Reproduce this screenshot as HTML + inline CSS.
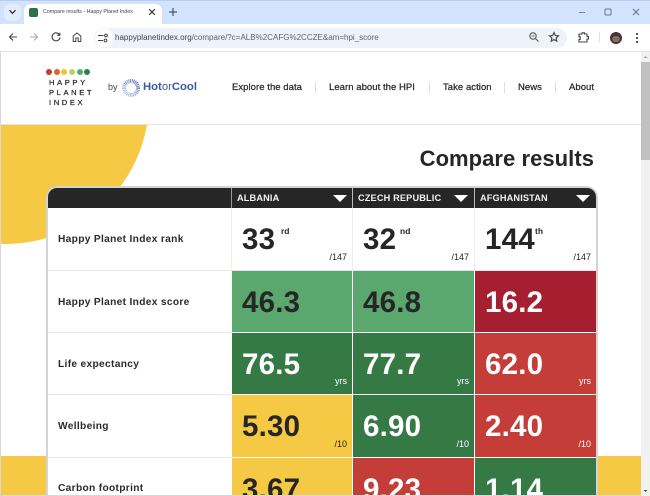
<!DOCTYPE html>
<html><head><meta charset="utf-8"><style>
*{box-sizing:border-box;margin:0;padding:0}
html,body{width:650px;height:496px;overflow:hidden;background:#fff;font-family:"Liberation Sans",sans-serif;color:#262626}
#w{position:relative;width:650px;height:496px;overflow:hidden;background:#fff}
.a{position:absolute}
.t{position:absolute;white-space:nowrap}
.nav{top:81px;font-size:9.5px;font-weight:400;letter-spacing:.05px;color:#2b2b2b;-webkit-text-stroke:.25px #2b2b2b;line-height:13px}
.sep{top:82px;width:1px;height:11px;background:#dedede}
.lab{left:58px;font-size:10.2px;font-weight:700;letter-spacing:.32px;color:#2b2b2b;line-height:14px}
.hd{top:192px;font-size:9.2px;font-weight:700;letter-spacing:.15px;color:#f2f2f2;line-height:12px}
.tri{top:195px;width:0;height:0;border-left:7px solid transparent;border-right:7px solid transparent;border-top:7px solid #fff}
.cell{position:absolute}
.v{position:absolute;left:10px;top:14px;font-size:29.5px;font-weight:700;line-height:36px;letter-spacing:.2px}
.u{position:absolute;right:5px;font-size:9px;line-height:11px;bottom:7px}
.sup{position:absolute;font-size:8.5px;font-weight:700;line-height:10px;top:18px}
.w{color:#fff}.d{color:#262626}
.hl{position:absolute;background:#e8e8e8;height:1px;left:48px;width:184px}
.dot{position:absolute;top:69px;width:6px;height:6px;border-radius:50%}
.lg{position:absolute;left:49px;font-size:7.6px;font-weight:400;letter-spacing:2.6px;color:#222;line-height:9px;-webkit-text-stroke:.2px #222}
</style></head><body><div id="w">

<!-- browser chrome -->
<div class="a" style="left:0;top:0;width:650px;height:24px;background:#d3e3fd"></div>
<div class="a" style="left:0;top:0;width:650px;height:1px;background:#b9cdec"></div>
<div class="a" style="left:4px;top:4px;width:17px;height:17px;border-radius:6px;background:#e4edfc"></div>
<svg class="a" style="left:8px;top:9px" width="9" height="6" viewBox="0 0 9 6"><path d="M1.5 1.2 4.5 4.3 7.5 1.2" fill="none" stroke="#333" stroke-width="1.3"/></svg>
<div class="a" style="left:24px;top:4px;width:138px;height:20px;background:#fff;border-radius:7px 7px 0 0"></div>
<div class="a" style="left:29px;top:8px;width:9px;height:9px;border-radius:2px;background:#2f7048"></div>
<div class="t" style="left:43px;top:7px;font-size:5.3px;line-height:10px;color:#444">Compare results - Happy Planet Index</div>
<svg class="a" style="left:148px;top:8px" width="8" height="8" viewBox="0 0 8 8"><path d="M1.2 1.2 6.8 6.8M6.8 1.2 1.2 6.800" stroke="#333" stroke-width="1.1"/></svg>
<svg class="a" style="left:168px;top:7px" width="10" height="10" viewBox="0 0 10 10"><path d="M5 1V9M1 5H9" stroke="#44546a" stroke-width="1.2"/></svg>
<svg class="a" style="left:578px;top:6px" width="66" height="12" viewBox="0 0 66 12"><path d="M1 6.500H7" stroke="#7a8596" stroke-width="1"/><rect x="27" y="3" width="6" height="6" rx="1" fill="none" stroke="#6a7587" stroke-width="1"/><path d="M55 3 61 9M61 3 55 9" stroke="#6a7587" stroke-width="1"/></svg>

<div class="a" style="left:0;top:24px;width:650px;height:27px;background:#fff"></div>
<div class="a" style="left:0;top:51px;width:650px;height:1px;background:#e2e2e2"></div>
<svg class="a" style="left:7px;top:31px" width="12" height="12" viewBox="0 0 12 12"><path d="M10 6H2.500M6 2.500 2.500 6 6 9.500" fill="none" stroke="#444" stroke-width="1.1"/></svg>
<svg class="a" style="left:28px;top:31px" width="12" height="12" viewBox="0 0 12 12"><path d="M2 6H9.500M6 2.500 9.500 6 6 9.500" fill="none" stroke="#aaa" stroke-width="1.1"/></svg>
<svg class="a" style="left:50px;top:31px" width="12" height="12" viewBox="0 0 12 12"><path d="M9.600 4A4 4 0 1 0 10 6.500M9.800 1.800V4.300H7.300" fill="none" stroke="#444" stroke-width="1.100"/></svg>
<svg class="a" style="left:71px;top:31px" width="12" height="12" viewBox="0 0 12 12"><path d="M2.200 10.500V5L6 2 9.800 5V10.500H7.200V7H4.800V10.500Z" fill="none" stroke="#444" stroke-width="1"/></svg>
<div class="a" style="left:94px;top:28px;width:473px;height:20px;border-radius:10px;background:#eef3fb"></div>
<div class="a" style="left:95px;top:29px;width:18px;height:18px;border-radius:9px;background:#fff"></div>
<svg class="a" style="left:97px;top:32px" width="12" height="12" viewBox="0 0 12 12"><path d="M1 3.500H6.500M1 8.500H6" fill="none" stroke="#444" stroke-width="1"/><circle cx="9" cy="3.500" r="1.400" fill="none" stroke="#444"/><circle cx="8.500" cy="8.500" r="1.400" fill="none" stroke="#444"/></svg>
<div class="t" style="left:115px;top:31px;font-size:8.02px;line-height:14px;color:#5a6270"><span style="color:#3d4350">happyplanetindex.org</span>/compare/?c=ALB%2CAFG%2CCZE&amp;am=hpi_score</div>
<svg class="a" style="left:528px;top:31px" width="12" height="12" viewBox="0 0 12 12"><circle cx="5" cy="5" r="3.200" fill="none" stroke="#555" stroke-width="1.100"/><path d="M7.500 7.500 10.500 10.500M3.500 5H6.500" stroke="#555" stroke-width="1.100"/></svg>
<svg class="a" style="left:548px;top:31px" width="12" height="12" viewBox="0 0 12 12"><path d="M6 1.500 7.300 4.500 10.500 4.800 8.100 7 8.800 10.200 6 8.500 3.200 10.200 3.900 7 1.500 4.800 4.700 4.500Z" fill="none" stroke="#444" stroke-width="1.100"/></svg>
<svg class="a" style="left:577px;top:31px" width="13" height="13" viewBox="0 0 13 13"><path d="M2 3H5V1.800H7.500V3H10V5.500H11.500V8H10V11H2V8.500H3.200V5.800H2Z" fill="none" stroke="#444" stroke-width="1.100"/></svg>
<div class="a" style="left:599px;top:32px;width:1px;height:11px;background:#dfe3ea"></div>
<div class="a" style="left:610px;top:32px;width:12px;height:12px;border-radius:50%;background:#3f3432"></div>
<div class="a" style="left:612px;top:36px;width:8px;height:6px;background:#8a6a60;border-radius:3px"></div>
<div class="a" style="left:636px;top:33px;width:2px;height:2px;background:#555;box-shadow:0 4px #555,0 8px #555"></div>

<!-- page shapes -->
<div class="a" style="left:0;top:124px;width:641px;height:1px;background:#e4e4e4"></div>
<div class="a" style="left:0;top:125px;width:641px;height:371px;overflow:hidden">
 <div class="a" style="left:-138px;top:-168px;width:287px;height:287px;border-radius:50%;background:#f6c945"></div>
 <div class="a" style="left:0;top:331px;width:641px;height:40px;background:#f6c945"></div>
</div>
<div class="a" style="left:0;top:52px;width:1px;height:444px;background:#d8d8d8"></div>

<!-- scrollbar -->
<div class="a" style="left:641px;top:52px;width:9px;height:444px;background:#f1f1f1"></div>
<div class="a" style="left:641px;top:62px;width:9px;height:98px;background:#c1c1c1"></div>
<svg class="a" style="left:641px;top:53px" width="9" height="8"><path d="M2.500 5 4.500 3 6.500 5Z" fill="#a0a0a0"/></svg>
<svg class="a" style="left:641px;top:487px" width="9" height="8"><path d="M2.500 3 4.500 5 6.500 3Z" fill="#505050"/></svg>

<!-- logo -->
<div class="dot" style="left:46px;background:#c8392f"></div>
<div class="dot" style="left:54px;background:#e4622d"></div>
<div class="dot" style="left:61px;background:#f3c431"></div>
<div class="dot" style="left:69px;background:#b9d26f"></div>
<div class="dot" style="left:77px;background:#58a86b"></div>
<div class="dot" style="left:84px;background:#2f7d48"></div>
<div class="lg" style="top:78px">HAPPY</div>
<div class="lg" style="top:88px">PLANET</div>
<div class="lg" style="top:98px">INDEX</div>
<div class="t" style="left:108px;top:81px;font-size:9px;line-height:13px;color:#444">by</div>
<svg class="a" style="left:121px;top:78px" width="20" height="20" viewBox="0 0 20 20"><defs><linearGradient id="g" x1="1" y1="0" x2="0" y2="1"><stop offset="0" stop-color="#3f5fae"/><stop offset="1" stop-color="#b9c6ea"/></linearGradient></defs><circle cx="10" cy="10" r="7" fill="none" stroke="url(#g)" stroke-dasharray=".8 .8" stroke-width="4"/></svg>
<div class="t" style="left:143px;top:80px;font-size:11.3px;line-height:15px;font-weight:700;color:#3a5aa6">Hot<span style="font-weight:400">or</span>Cool</div>

<!-- nav -->
<div class="t nav" style="left:232px">Explore the data</div>
<div class="a sep" style="left:315px"></div>
<div class="t nav" style="left:329px">Learn about the HPI</div>
<div class="a sep" style="left:429px"></div>
<div class="t nav" style="left:443px">Take action</div>
<div class="a sep" style="left:504px"></div>
<div class="t nav" style="left:518px">News</div>
<div class="a sep" style="left:555px"></div>
<div class="t nav" style="left:569px">About</div>

<div class="t" style="right:56px;top:145px;font-size:22px;font-weight:700;line-height:27px;letter-spacing:.05px;color:#262626">Compare results</div>

<!-- table -->
<div class="a" style="left:46px;top:186px;width:552px;height:320px;border:2px solid #d4d4d4;border-radius:12px;background:#fff"></div>
<div class="a" style="left:48px;top:188px;width:548px;height:20px;background:#262626;border-radius:9px 9px 0 0"></div>
<div class="a" style="left:231px;top:188px;width:1px;height:20px;background:#999"></div>
<div class="a" style="left:352px;top:188px;width:1px;height:20px;background:#bbb"></div>
<div class="a" style="left:474px;top:188px;width:1px;height:20px;background:#bbb"></div>
<div class="hd t" style="left:237px">ALBANIA</div><div class="a tri" style="left:333px"></div>
<div class="hd t" style="left:358px">CZECH REPUBLIC</div><div class="a tri" style="left:454px"></div>
<div class="hd t" style="left:480px">AFGHANISTAN</div><div class="a tri" style="left:576px"></div>

<div class="t lab" style="top:233px">Happy Planet Index rank</div>
<div class="t lab" style="top:296px">Happy Planet Index score</div>
<div class="t lab" style="top:358px">Life expectancy</div>
<div class="t lab" style="top:420px">Wellbeing</div>
<div class="t lab" style="top:482px">Carbon footprint</div>
<div class="hl" style="top:270px"></div><div class="hl" style="top:332px"></div><div class="hl" style="top:394px"></div><div class="hl" style="top:457px"></div>

<!-- row 1 -->
<div class="a" style="left:231px;top:208px;width:1px;height:62px;background:#eee"></div>
<div class="a" style="left:352px;top:208px;width:1px;height:62px;background:#eee"></div>
<div class="a" style="left:474px;top:208px;width:1px;height:62px;background:#eee"></div>
<div class="hl" style="top:270px;left:232px;width:364px"></div>
<div class="cell d" style="left:232px;top:208px;width:120px;height:62px"><div class="v">33</div><div class="sup" style="left:49px">rd</div><div class="u">/147</div></div>
<div class="cell d" style="left:353px;top:208px;width:121px;height:62px"><div class="v">32</div><div class="sup" style="left:47px">nd</div><div class="u">/147</div></div>
<div class="cell d" style="left:475px;top:208px;width:121px;height:62px"><div class="v">144</div><div class="sup" style="left:60px">th</div><div class="u">/147</div></div>
<!-- row 2 -->
<div class="cell d" style="left:232px;top:271px;width:120px;height:61px;background:#5aa86e"><div class="v">46.3</div></div>
<div class="cell d" style="left:353px;top:271px;width:121px;height:61px;background:#5aa86e"><div class="v">46.8</div></div>
<div class="cell w" style="left:475px;top:271px;width:121px;height:61px;background:#a51f30"><div class="v">16.2</div></div>
<!-- row 3 -->
<div class="cell w" style="left:232px;top:333px;width:120px;height:61px;background:#357a45"><div class="v">76.5</div><div class="u">yrs</div></div>
<div class="cell w" style="left:353px;top:333px;width:121px;height:61px;background:#357a45"><div class="v">77.7</div><div class="u">yrs</div></div>
<div class="cell w" style="left:475px;top:333px;width:121px;height:61px;background:#c43d38"><div class="v">62.0</div><div class="u">yrs</div></div>
<!-- row 4 -->
<div class="cell d" style="left:232px;top:395px;width:120px;height:62px;background:#f6c945"><div class="v">5.30</div><div class="u">/10</div></div>
<div class="cell w" style="left:353px;top:395px;width:121px;height:62px;background:#357a45"><div class="v">6.90</div><div class="u">/10</div></div>
<div class="cell w" style="left:475px;top:395px;width:121px;height:62px;background:#c43d38"><div class="v">2.40</div><div class="u">/10</div></div>
<!-- row 5 -->
<div class="cell d" style="left:232px;top:458px;width:120px;height:38px;background:#f6c945;overflow:hidden"><div class="v">3.67</div></div>
<div class="cell w" style="left:353px;top:458px;width:121px;height:38px;background:#c43d38;overflow:hidden"><div class="v">9.23</div></div>
<div class="cell w" style="left:475px;top:458px;width:121px;height:38px;background:#357a45;overflow:hidden"><div class="v">1.14</div></div>

<div class="a" style="left:0;top:495px;width:641px;height:1px;background:#d8d8d8"></div>
</div></body></html>
